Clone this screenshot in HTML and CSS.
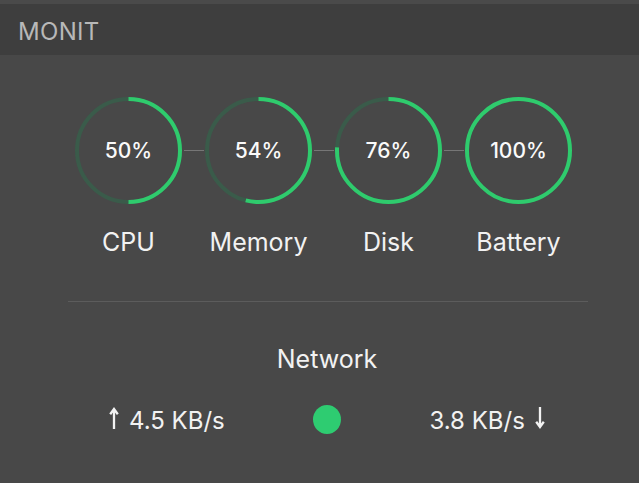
FILE: index.html
```html
<!DOCTYPE html>
<html>
<head>
<meta charset="utf-8">
<link rel="stylesheet" href="styles.css">
</head>
<body>
<div class="app">
  <header class="header"><span class="title">MONIT</span></header>
  <main class="main">
    <section class="gauges">
      <div class="ring">
        <svg viewBox="0 0 107 107" width="107" height="107"><circle class="track" cx="53.5" cy="53.5" r="51.5"/><circle class="bar" cx="53.5" cy="53.5" r="51.5" pathLength="100" stroke-dasharray="50 100"/></svg>
        <span class="pct">50%</span>
      </div>
      <div class="link"></div>
      <div class="ring">
        <svg viewBox="0 0 107 107" width="107" height="107"><circle class="track" cx="53.5" cy="53.5" r="51.5"/><circle class="bar" cx="53.5" cy="53.5" r="51.5" pathLength="100" stroke-dasharray="54 100"/></svg>
        <span class="pct">54%</span>
      </div>
      <div class="link"></div>
      <div class="ring">
        <svg viewBox="0 0 107 107" width="107" height="107"><circle class="track" cx="53.5" cy="53.5" r="51.5"/><circle class="bar" cx="53.5" cy="53.5" r="51.5" pathLength="100" stroke-dasharray="76 100"/></svg>
        <span class="pct">76%</span>
      </div>
      <div class="link"></div>
      <div class="ring">
        <svg viewBox="0 0 107 107" width="107" height="107"><circle class="track" cx="53.5" cy="53.5" r="51.5"/><circle class="bar" cx="53.5" cy="53.5" r="51.5" pathLength="100" stroke-dasharray="100 100"/></svg>
        <span class="pct">100%</span>
      </div>
      <div class="label c1">CPU</div>
      <div class="label c3">Memory</div>
      <div class="label c5">Disk</div>
      <div class="label c7">Battery</div>
    </section>
    <hr class="divider">
    <section class="network">
      <div class="net-title">Network</div>
      <div class="net-row">
        <span class="speed"><svg class="arrow up" viewBox="0 0 10 22" width="10" height="22"><path d="M5 22V2.5M1.2 7.2L5 2l3.8 5.2"/></svg> 4.5 KB/s</span>
        <span class="dot"></span>
        <span class="speed">3.8 KB/s <svg class="arrow down" viewBox="0 0 10 22" width="10" height="22"><path d="M5 0V19.5M1.2 14.8L5 20l3.8-5.2"/></svg></span>
      </div>
    </section>
  </main>
</div>
</body>
</html>
```
FILE: styles.css
```css
* { box-sizing: border-box; }
html, body { margin: 0; padding: 0; }
body {
  width: 639px;
  height: 483px;
  background: #4a4a4a;
  font-family: "Inter", "Liberation Sans", sans-serif;
  color: #f2f2f2;
  overflow: hidden;
}
.app {
  padding-top: 4px;
  height: 100%;
}
.header {
  height: 51px;
  background: #3e3e3e;
  display: flex;
  align-items: center;
  padding: 4px 0 0 18px;
}
.title {
  font-size: 24px;
  color: #b8b8b8;
  font-weight: 400;
  letter-spacing: 0.3px;
}
.main {
  background: #484848;
  height: calc(100% - 51px);
  padding-top: 42px;
}
.gauges {
  display: grid;
  grid-template-columns: 107px 23px 107px 23px 107px 23px 107px;
  grid-template-rows: 107px auto;
  row-gap: 23px;
  margin-left: 75px;
  width: 497px;
}
.ring {
  position: relative;
  width: 107px;
  height: 107px;
  display: flex;
  align-items: center;
  justify-content: center;
}
.ring svg {
  position: absolute;
  left: 0;
  top: 0;
  transform: rotate(-90deg);
}
.track {
  fill: none;
  stroke: #3a5b4a;
  stroke-width: 4;
}
.bar {
  fill: none;
  stroke: #2fcb6d;
  stroke-width: 4;
}
.pct {
  position: relative;
  font-size: 21px;
  font-weight: 500;
  color: #fafafa;
}
.link {
  align-self: center;
  height: 1px;
  background: #767676;
  margin: 0 1px 0 2px;
}
.label {
  grid-row: 2;
  justify-self: center;
  font-size: 25px;
  line-height: 30px;
  white-space: nowrap;
}
.c1 { grid-column: 1; }
.c3 { grid-column: 3; }
.c5 { grid-column: 5; }
.c7 { grid-column: 7; }
.divider {
  border: none;
  height: 1px;
  background: #5c5c5c;
  margin: 44px 0 0 68px;
  width: 520px;
}
.network {
  margin-left: 87px;
  width: 480px;
  display: flex;
  flex-direction: column;
  align-items: center;
}
.net-title {
  margin-top: 42px;
  font-size: 25px;
  line-height: 30px;
}
.net-row {
  margin-top: 32px;
  display: grid;
  grid-template-columns: 160px 160px 160px;
  align-items: center;
  justify-items: center;
  width: 480px;
}
.speed {
  font-size: 24px;
  line-height: 30px;
  white-space: nowrap;
}
.arrow {
  vertical-align: baseline;
  fill: none;
  stroke: #f2f2f2;
  stroke-width: 2.3;
}
.arrow.up { margin-right: 3px; }
.arrow.down { margin-left: 3px; }
.dot {
  width: 28px;
  height: 29px;
  border-radius: 50%;
  background: #2ecc71;
  margin-top: -4px;
}
```
